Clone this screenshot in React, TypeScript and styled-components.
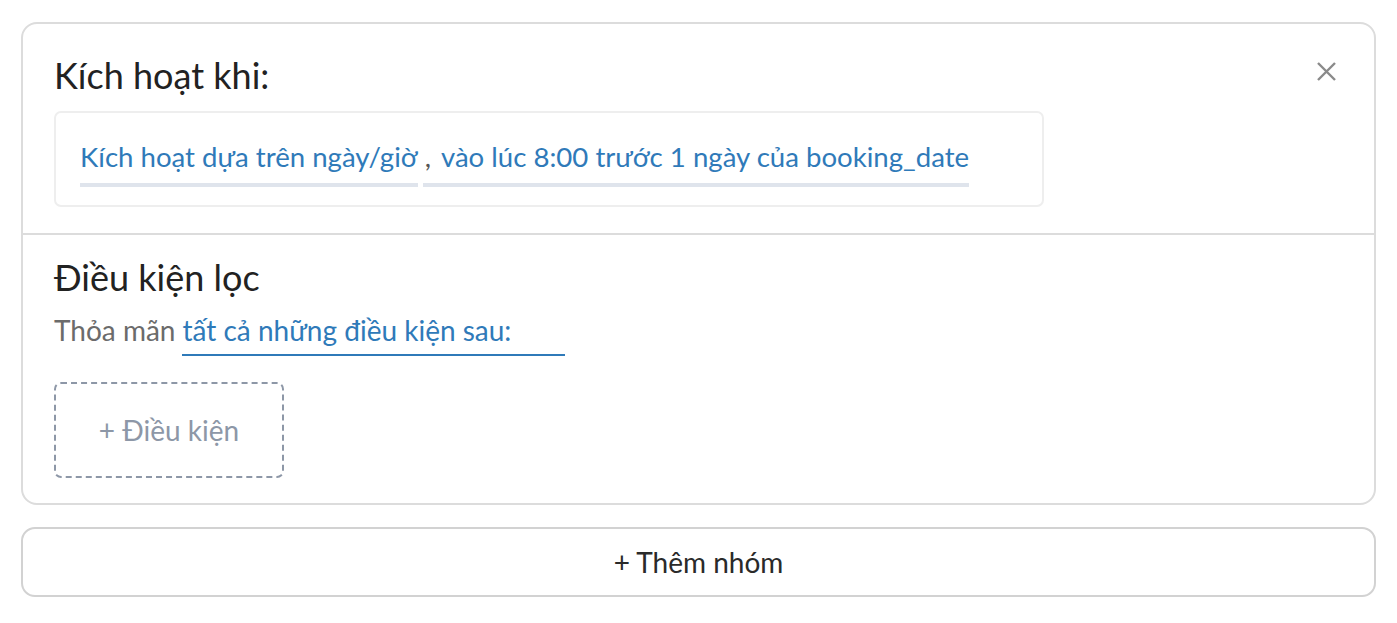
import React from "react";
import styled, { createGlobalStyle } from "styled-components";

const Global = createGlobalStyle`
  html, body { margin: 0; padding: 0; background: #ffffff; }
  body { font-family: "Lato", "Noto Sans", sans-serif; }
  * { box-sizing: border-box; }
`;

const Page = styled.div`
  padding: 22px 21px 0 21px;
  display: flex;
  flex-direction: column;
  gap: 22px;
`;

const Card = styled.div`
  border: 2px solid #dcdcdc;
  border-radius: 16px;
  background: #fff;
`;

const TriggerSection = styled.div`
  position: relative;
  padding: 29px 31px 26px 31px;
`;

const FilterSection = styled.div`
  padding: 20px 31px 25px 31px;
  border-top: 2px solid #dcdcdc;
`;

const Heading = styled.h2`
  margin: 0;
  font-weight: 400;
  font-size: 36px;
  line-height: 44px;
  color: #222;
`;

const CloseButton = styled.button`
  position: absolute;
  top: 38px;
  right: 38px;
  width: 19px;
  height: 19px;
  padding: 0;
  border: none;
  background: none;
  display: flex;
  align-items: center;
  justify-content: center;
  cursor: pointer;
`;

const TriggerBox = styled.div`
  margin-top: 14px;
  width: 990px;
  border: 2px solid #eeeeee;
  border-radius: 7px;
  padding: 27px 24px 18px 24px;
  display: flex;
  align-items: flex-end;
  gap: 5px;
`;

const Chip = styled.span`
  font-size: 27.6px;
  line-height: 34px;
  color: #2f7ab9;
  border-bottom: 4px solid #dfe4ec;
  padding-bottom: 9px;
  white-space: nowrap;
`;

const Comma = styled.span`
  color: #555;
  margin: 0 10px 0 2px;
`;

const FilterLine = styled.div`
  margin-top: 14px;
  font-size: 28px;
  line-height: 34px;
  display: flex;
  align-items: flex-end;
`;

const Muted = styled.span`
  color: #6b6b6b;
  margin-right: 7px;
  padding-bottom: 9px;
`;

const Select = styled.span`
  color: #2f7ab9;
  border-bottom: 2px solid #2f7ab9;
  width: 383px;
  padding-bottom: 7px;
`;

const AddCondition = styled.button`
  display: block;
  margin-top: 26px;
  width: 230px;
  height: 96px;
  border: 2px dashed #8d97a7;
  border-radius: 7px;
  background: #fff;
  color: #8d97a7;
  font-family: inherit;
  font-size: 28px;
  cursor: pointer;
`;

const AddGroup = styled.button`
  width: 100%;
  height: 70px;
  border: 2px solid #d2d2d2;
  border-radius: 14px;
  background: #fff;
  color: #2a2a2a;
  font-family: inherit;
  font-size: 28px;
  cursor: pointer;
`;

export default function App() {
  return (
    <>
      <Global />
      <Page>
        <Card>
          <TriggerSection>
            <Heading>Kích hoạt khi:</Heading>
            <CloseButton aria-label="Đóng">
              <svg width="19" height="19" viewBox="0 0 19 19">
                <path d="M1 1 L18 18 M18 1 L1 18" stroke="#8a8a8a" strokeWidth="2.4" />
              </svg>
            </CloseButton>
            <TriggerBox>
              <Chip>Kích hoạt dựa trên ngày/giờ</Chip>
              <Chip>
                <Comma>,</Comma>vào lúc 8:00 trước 1 ngày của booking_date
              </Chip>
            </TriggerBox>
          </TriggerSection>
          <FilterSection>
            <Heading>Điều kiện lọc</Heading>
            <FilterLine>
              <Muted>Thỏa mãn</Muted>
              <Select>tất cả những điều kiện sau:</Select>
            </FilterLine>
            <AddCondition>+ Điều kiện</AddCondition>
          </FilterSection>
        </Card>
        <AddGroup>+ Thêm nhóm</AddGroup>
      </Page>
    </>
  );
}
